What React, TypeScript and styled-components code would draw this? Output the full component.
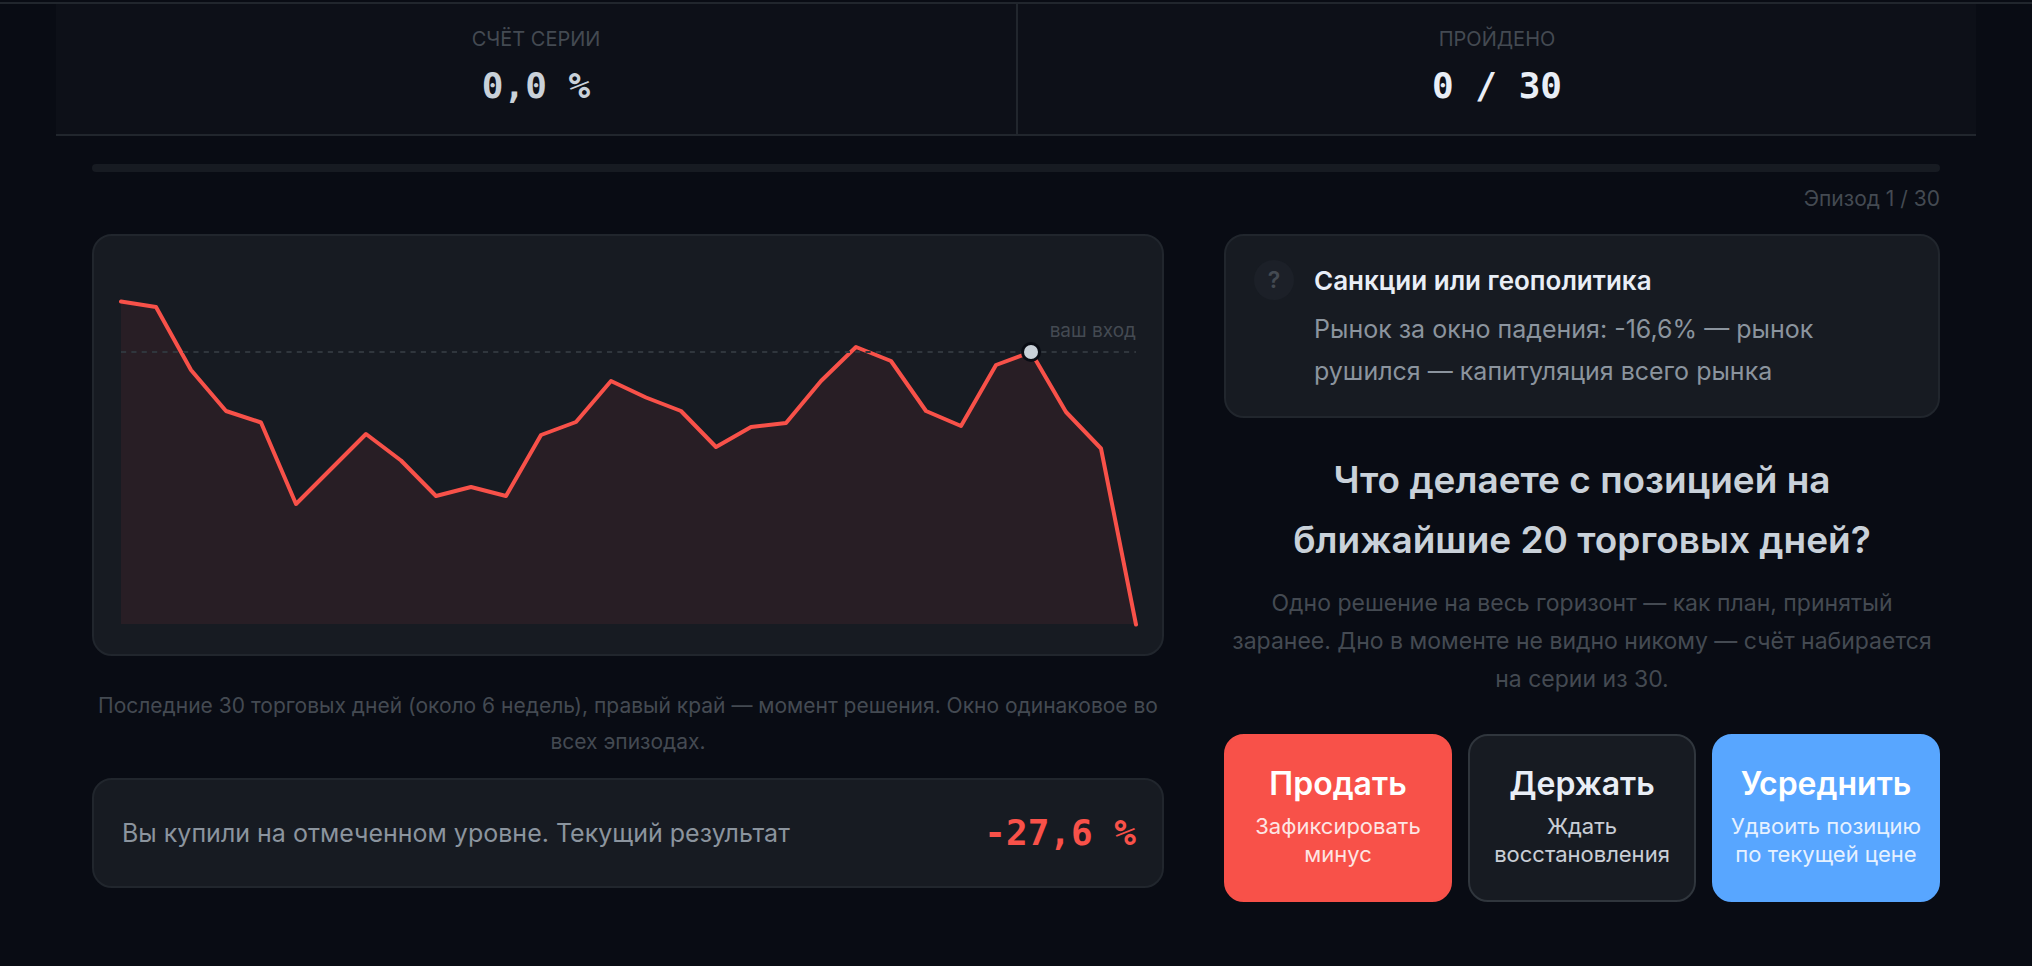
import React from 'react';
import styled, { createGlobalStyle, css } from 'styled-components';

const color = {
  page: '#090c14',
  panel: '#0d1018',
  card: '#171b22',
  border: '#21262d',
  borderStrong: '#30363d',
  chip: '#1c2028',
  faint: '#444a52',
  muted: '#8b949e',
  text: '#c9d1d9',
  bright: '#e9eef6',
  red: '#f85149',
  blue: '#58a6ff',
};

const sans = "Inter, 'Liberation Sans', sans-serif";
const mono = "'DejaVu Sans Mono', 'Liberation Mono', monospace";

const GlobalStyle = createGlobalStyle`
  *, *::before, *::after { box-sizing: border-box; }
  body {
    margin: 0;
    background: ${color.page};
    color: ${color.text};
    font-family: ${sans};
  }
  h1, h2, p, dl, dd { margin: 0; }
`;

const TopBar = styled.header`
  padding-top: 2px;
  border-bottom: 2px solid ${color.border};
`;

const Page = styled.main`
  padding: 0 56px 64px;
`;

const Stats = styled.dl`
  display: grid;
  grid-template-columns: 1fr 1fr;
  border-bottom: 2px solid ${color.border};
`;

const Stat = styled.div`
  display: flex;
  flex-direction: column;
  align-items: center;
  gap: 2px;
  padding: 20px 16px 18px;
  background: ${color.panel};

  & + & {
    border-left: 2px solid ${color.border};
  }
`;

const StatLabel = styled.dt`
  font-size: 20px;
  line-height: 30px;
  color: ${color.faint};
  text-transform: uppercase;
`;

const Figure = styled.span<{ $color: string }>`
  font-family: ${mono};
  font-size: 36px;
  font-weight: 700;
  line-height: 60px;
  color: ${(p) => p.$color};
  white-space: nowrap;
`;

const Content = styled.div`
  padding: 28px 36px 0;
`;

const Track = styled.div`
  height: 8px;
  border-radius: 4px;
  background: ${color.card};
`;

const Episode = styled.p`
  margin: 10px 0 18px;
  font-size: 21px;
  line-height: 34px;
  color: ${color.faint};
  text-align: right;
`;

const Columns = styled.div`
  display: grid;
  grid-template-columns: 268fr 179fr;
  align-items: start;
  gap: 60px;
`;

const Column = styled.section`
  display: flex;
  flex-direction: column;
  min-width: 0;
`;

const card = css`
  border: 2px solid ${color.border};
  border-radius: 20px;
  background: ${color.card};
`;

const ChartCard = styled.div`
  ${card}
  overflow: hidden;
`;

const ChartSvg = styled.svg`
  display: block;
  width: 100%;
  height: auto;
`;

const ChartCaption = styled.p`
  margin: 32px 0 18px;
  font-size: 21px;
  line-height: 36px;
  color: ${color.faint};
  text-align: center;
`;

const ResultCard = styled.div`
  ${card}
  display: flex;
  align-items: center;
  justify-content: space-between;
  gap: 24px;
  padding: 23px 26px 23px 28px;
`;

const BodyText = styled.p`
  font-size: 25px;
  line-height: 42px;
  color: ${color.muted};
`;

const ContextCard = styled.div`
  ${card}
  display: flex;
  gap: 20px;
  padding: 24px 28px;
`;

const Badge = styled.span`
  display: flex;
  flex: none;
  align-items: center;
  justify-content: center;
  width: 40px;
  height: 40px;
  border-radius: 50%;
  background: ${color.chip};
  color: ${color.faint};
  font-size: 23px;
  font-weight: 600;
`;

const ContextBody = styled.div`
  display: flex;
  flex-direction: column;
  gap: 6px;
`;

const ContextTitle = styled.h2`
  font-size: 26px;
  font-weight: 600;
  line-height: 42px;
  color: ${color.bright};
`;

const Question = styled.h1`
  margin-top: 32px;
  font-size: 37px;
  font-weight: 600;
  line-height: 60px;
  text-align: center;
`;

const Hint = styled.p`
  margin: 14px 0 36px;
  padding: 0 4px;
  font-size: 23px;
  line-height: 38px;
  color: ${color.faint};
  text-align: center;
`;

const Actions = styled.div`
  display: grid;
  grid-template-columns: repeat(3, 1fr);
  gap: 16px;
`;

const fills = {
  sell: { background: color.red, border: color.red, text: '#ffffff' },
  hold: { background: color.card, border: color.borderStrong, text: color.bright },
  buy: { background: color.blue, border: color.blue, text: '#ffffff' },
};

const ActionButton = styled.button<{ $kind: keyof typeof fills }>`
  display: flex;
  flex-direction: column;
  align-items: center;
  gap: 6px;
  padding: 26px 12px 32px;
  border: 2px solid ${(p) => fills[p.$kind].border};
  border-radius: 20px;
  background: ${(p) => fills[p.$kind].background};
  color: ${(p) => fills[p.$kind].text};
  font-family: inherit;
  cursor: pointer;
`;

const ActionTitle = styled.span`
  font-size: 32px;
  font-weight: 600;
  line-height: 44px;
`;

const ActionNote = styled.span`
  font-size: 22px;
  line-height: 28px;
  opacity: 0.85;
`;

const LEFT = 27;
const STEP = 35;
const FLOOR = 388;
const ENTRY = 26;

const prices = [
  65.5, 71, 134, 175, 186.5, 268, 233, 198, 224.5, 260, 251, 260, 199, 186, 145,
  161.5, 175, 211, 191, 187, 145, 111, 125, 175, 190, 129, 116, 176, 212.5, 388.5,
];

const chartX = (i: number) => LEFT + i * STEP;
const linePoints = prices.map((y, i) => `${chartX(i)},${y}`).join(' ');
const chartEnd = chartX(prices.length - 1);
const areaPoints = `${LEFT},${FLOOR} ${linePoints} ${chartEnd},${FLOOR}`;

function PriceChart() {
  const entryX = chartX(ENTRY);
  const entryY = prices[ENTRY];
  return (
    <ChartSvg viewBox="0 0 1068 418" role="img" aria-label="График цены за 30 торговых дней">
      <polygon points={areaPoints} fill="#f85149" fillOpacity="0.08" />
      <polyline
        points={linePoints}
        fill="none"
        stroke={color.red}
        strokeWidth="4"
        strokeLinecap="round"
        strokeLinejoin="round"
      />
      <line
        x1={LEFT}
        y1={entryY}
        x2={chartEnd}
        y2={entryY}
        stroke={color.borderStrong}
        strokeWidth="2"
        strokeDasharray="5.17 5.17"
      />
      <circle cx={entryX} cy={entryY} r="10" fill={color.page} />
      <circle cx={entryX} cy={entryY} r="7" fill={color.text} />
      <text
        x={chartEnd}
        y={entryY - 15}
        textAnchor="end"
        fill={color.faint}
        fontFamily={sans}
        fontSize="19"
      >
        ваш вход
      </text>
    </ChartSvg>
  );
}

export default function App() {
  return (
    <>
      <GlobalStyle />
      <TopBar />
      <Page>
        <Stats>
          <Stat>
            <StatLabel>Счёт серии</StatLabel>
            <Figure as="dd" $color={color.text}>0,0 %</Figure>
          </Stat>
          <Stat>
            <StatLabel>Пройдено</StatLabel>
            <Figure as="dd" $color={color.bright}>0 / 30</Figure>
          </Stat>
        </Stats>
        <Content>
          <Track role="progressbar" aria-label="Пройдено эпизодов" aria-valuemin={0} aria-valuemax={30} aria-valuenow={0} />
          <Episode>Эпизод 1 / 30</Episode>
          <Columns>
            <Column>
              <ChartCard>
                <PriceChart />
              </ChartCard>
              <ChartCaption>
                Последние 30 торговых дней (около 6 недель), правый край — момент решения. Окно одинаковое во всех эпизодах.
              </ChartCaption>
              <ResultCard>
                <BodyText>Вы купили на отмеченном уровне. Текущий результат</BodyText>
                <Figure $color={color.red}>-27,6 %</Figure>
              </ResultCard>
            </Column>
            <Column>
              <ContextCard>
                <Badge aria-hidden="true">?</Badge>
                <ContextBody>
                  <ContextTitle>Санкции или геополитика</ContextTitle>
                  <BodyText>Рынок за окно падения: -16,6% — рынок рушился — капитуляция всего рынка</BodyText>
                </ContextBody>
              </ContextCard>
              <Question>Что делаете с позицией на ближайшие 20 торговых дней?</Question>
              <Hint>
                Одно решение на весь горизонт — как план, принятый заранее. Дно в моменте не видно никому — счёт набирается на серии из 30.
              </Hint>
              <Actions>
                <ActionButton type="button" $kind="sell">
                  <ActionTitle>Продать</ActionTitle>
                  <ActionNote>Зафиксировать минус</ActionNote>
                </ActionButton>
                <ActionButton type="button" $kind="hold">
                  <ActionTitle>Держать</ActionTitle>
                  <ActionNote>Ждать восстановления</ActionNote>
                </ActionButton>
                <ActionButton type="button" $kind="buy">
                  <ActionTitle>Усреднить</ActionTitle>
                  <ActionNote>Удвоить позицию по текущей цене</ActionNote>
                </ActionButton>
              </Actions>
            </Column>
          </Columns>
        </Content>
      </Page>
    </>
  );
}
